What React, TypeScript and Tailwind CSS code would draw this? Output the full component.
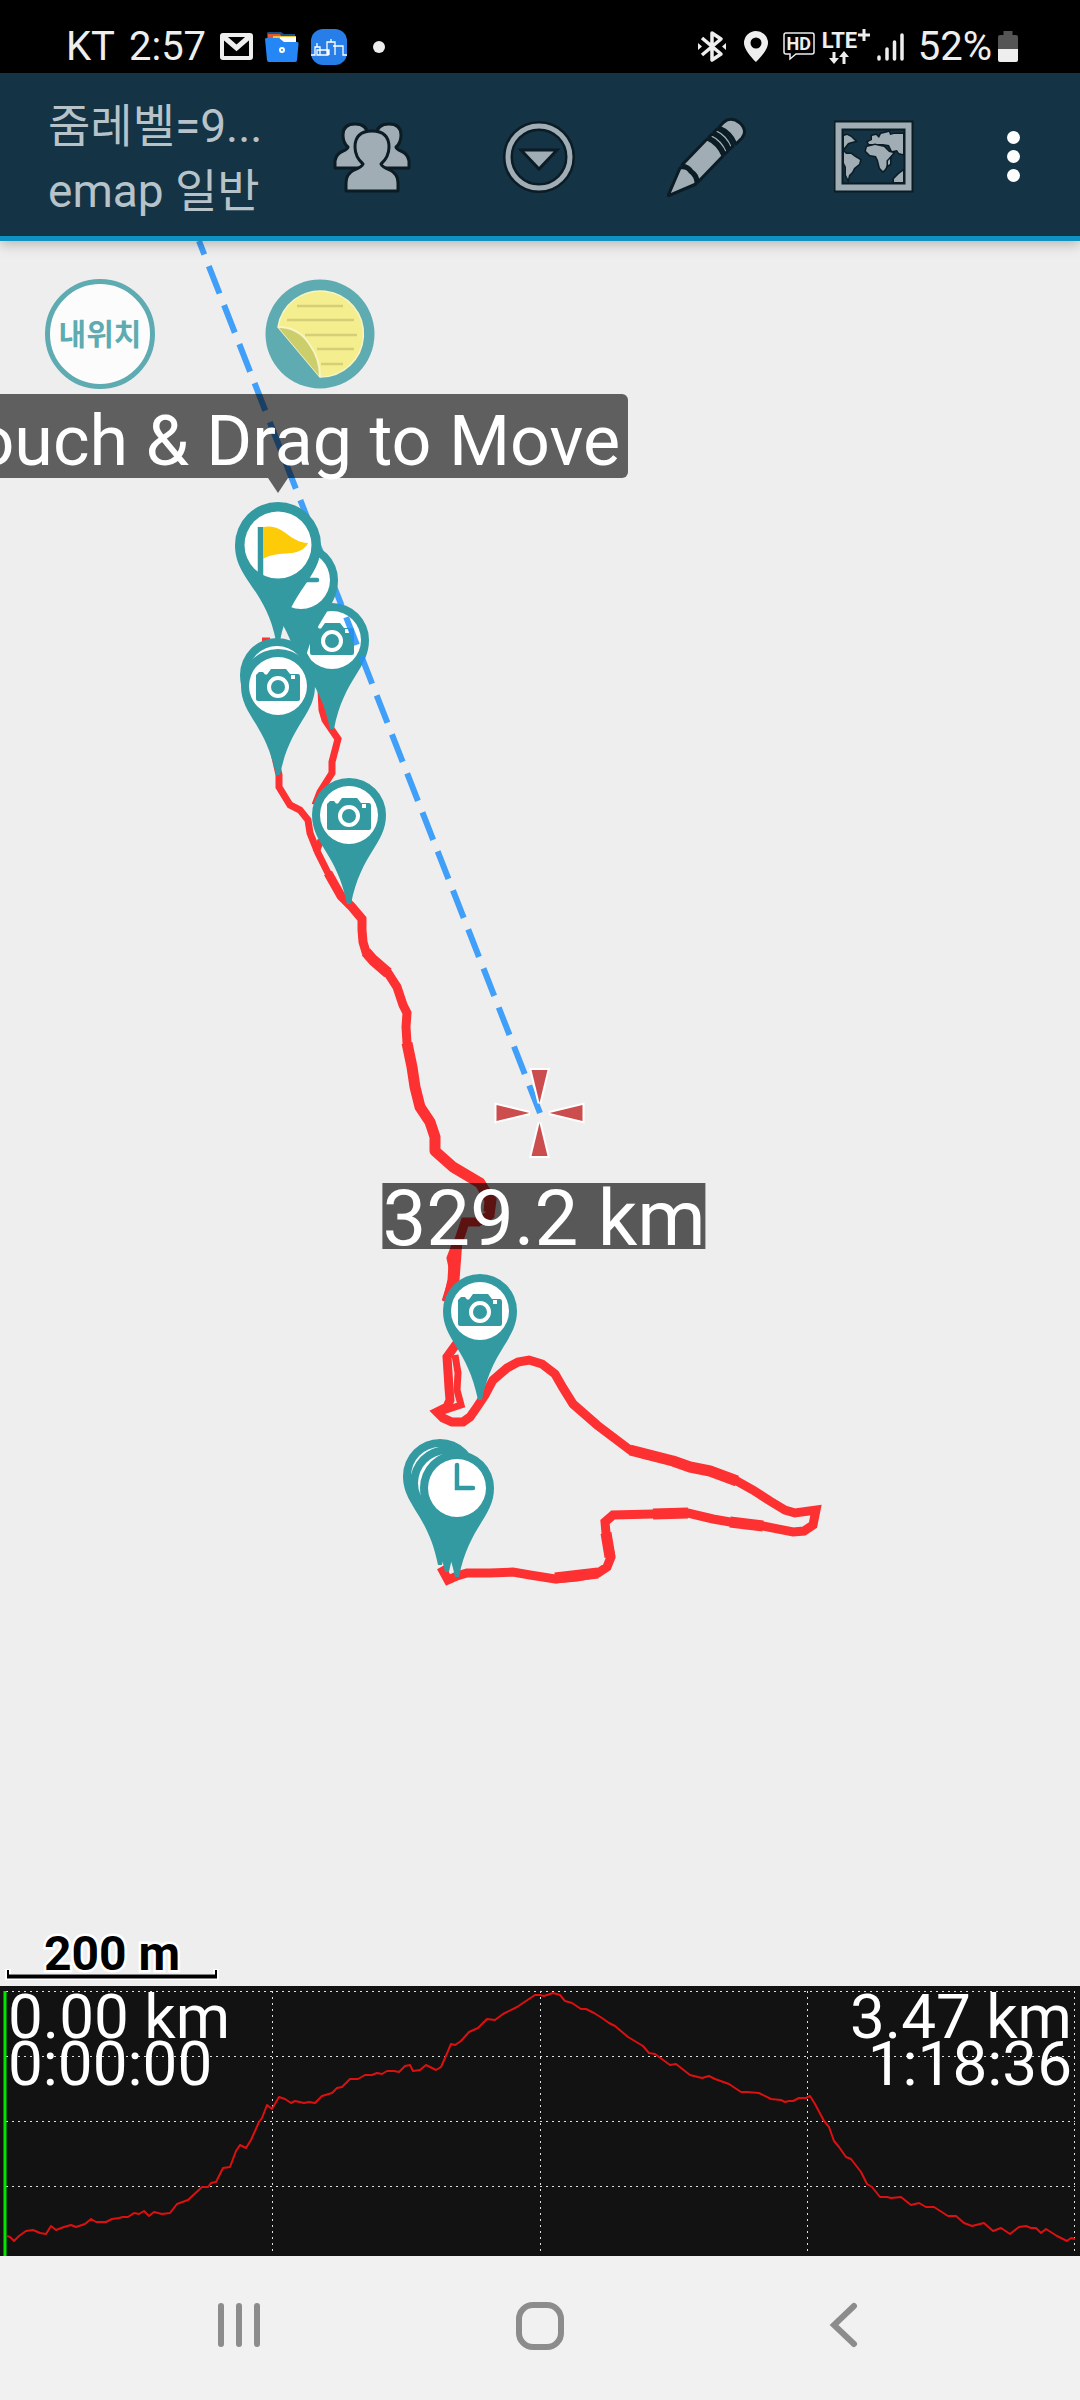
import React from "react";

const ROUTE_START =
  "M274 753 L279 775 L279 787 L290 805 L300 810 L308 820 L310 833 L318 853 L328 873 L341 896";

const ROUTE_MAIN =
  "M328 873 L341 896 L352 907 L362 919 L362 930 L363 942 L366 952 L373 960 L388 973 L397 987 L403 1005 L407 1013 L406 1027 L407 1043 L412 1067 L415 1087 L420 1107 L430 1122 L435 1137 L435 1151 L453 1167 L480 1183 L492 1200 L490 1215 L478 1222 L465 1222 L458 1243 L453 1263 L452 1280 L447 1302";

const ROUTE_LOOP =
  "M457 1343 L447 1357 L448 1372 L449 1388 L450 1400 L447 1407 L437 1412 L443 1418 L452 1422 L463 1422 L470 1417 L477 1407 L485 1395 L493 1380 L507 1368 L518 1362 L529 1360 L542 1364 L555 1374 L563 1388 L573 1404 L597 1425 L630 1450 L647 1455 L673 1461 L690 1467 L710 1471 L737 1481 L753 1490 L770 1501 L785 1510 L795 1513 L816 1510 L813 1525 L804 1531 L793 1532 L763 1526 L730 1522 L713 1519 L688 1513 L653 1514 L613 1515 L605 1522 L606 1533 L611 1557 L607 1567 L598 1573 L577 1577 L555 1579 L530 1575 L513 1572 L490 1573 L467 1573 L457 1576 L448 1580 L441 1567";

const ROUTE_RETURN =
  "M262 641 L270 641 M321 690 L322 710 L325 720 L338 739 L332 762 L332 773 L320 792 L315 805 M321 840 L316 852 M455 1355 L458 1373 L457 1390 L461 1405 L443 1411 M457 1240 L450 1258 L453 1272";

const ROUTE_WIDE =
  "M366 952 L373 960 L388 973 M407 1043 L412 1067 L415 1087 L420 1107 L430 1122 L435 1137 L435 1151 L453 1167 L480 1183 L490 1200 L489 1212 M457 1240 L454 1280 L447 1302 M630 1450 L673 1461 L690 1467 L710 1471 L737 1481 M763 1526 L730 1522 M688 1513 L653 1514 M606 1533 L610 1557 M598 1573 L555 1578";

const PROFILE =
  "7,250 10,251 14,255 19,250 26,245 33,244 40,247 46,248 51,240 56,244 64,241 71,239 76,241 85,238 91,233 96,236 106,236 112,233 119,232 123,231 128,231 134,227 139,228 144,225 149,230 154,226 162,228 170,227 177,218 188,214 202,201 208,201 211,197 216,196 223,182 230,181 236,165 240,159 246,162 251,154 259,136 262,132 267,119 272,123 279,111 285,113 291,117 295,115 304,117 309,116 315,117 322,110 332,107 337,102 342,101 350,93 358,93 365,89 372,89 377,87 382,88 387,85 394,85 399,86 405,80 410,79 413,85 420,84 426,79 436,84 441,81 445,72 451,58 455,59 461,55 469,46 478,42 487,33 495,34 503,28 517,21 535,9 540,9 544,10 553,7 560,9 565,15 572,17 581,23 586,23 594,27 602,32 609,37 615,40 628,51 643,60 649,67 655,68 670,79 676,78 690,89 702,92 709,90 715,93 729,98 741,106 747,106 759,107 771,113 781,114 785,116 789,115 793,115 799,112 806,112 810,110 815,118 824,135 829,141 834,155 839,161 846,171 851,173 861,186 867,198 872,201 880,211 887,211 891,212 901,211 911,219 919,217 926,221 934,221 948,230 956,230 964,237 972,240 984,237 993,245 1001,242 1010,248 1019,241 1026,240 1031,242 1036,242 1041,247 1046,243 1057,250 1067,255 1071,252 1075,253";

type PinProps = { x: number; y: number; kind: "camera" | "clock" };

function Pin({ x, y, kind }: PinProps) {
  return (
    <g transform={`translate(${x} ${y})`}>
      <path d="M-37 0A37 37 0 0 1 37 0C37 29 12 38 2 89H-2C-12 38-37 29-37 0Z" fill="#339aa2" />
      <circle r="29" fill="#fff" />
      {kind === "camera" ? (
        <>
          <path
            d="M-22-11L-19-14H-15L-13-11.500H-11L-7-17H8L12-12H20Q22-12 22-9V13Q22 15 20 15H-20Q-22 15-22 13Z"
            fill="#339aa2"
          />
          <circle cy="1" r="9" fill="none" stroke="#fff" strokeWidth="4" />
          <rect x="13" y="-11" width="4" height="4" fill="#fff" />
        </>
      ) : (
        <path d="M0-23V0H16" fill="none" stroke="#339aa2" strokeWidth="4.500" strokeLinecap="round" />
      )}
    </g>
  );
}

function FlagPin() {
  return (
    <g transform="translate(278 545)">
      <path d="M-43 0A43 43 0 0 1 43 0C43 34 12 44 2 96H-2C-12 44-43 34-43 0Z" fill="#339aa2" />
      <circle r="33.500" fill="#fff" />
      <path d="M-17.500-18V30" stroke="#339aa2" strokeWidth="5.500" />
      <path d="M-15-18C6-22 10-3 30-2C22 14 2 4-15 14Z" fill="#fdcb08" />
    </g>
  );
}

function MapDrawing() {
  return (
    <svg viewBox="0 241 1080 1745" className="block h-auto w-full" role="img" aria-label="Track map">
      <g fill="none" stroke="#fd3131">
        <path d={ROUTE_START} strokeWidth="7" />
        <path d={ROUTE_RETURN} strokeWidth="7" />
        <path d={ROUTE_MAIN} strokeWidth="9" />
        <path d={ROUTE_LOOP} strokeWidth="9" />
        <path d={ROUTE_WIDE} strokeWidth="11" strokeLinejoin="round" />
      </g>
      <Pin x={332} y={640} kind="camera" />
      <path
        d="M540 1113L199 241"
        stroke="#2391fa"
        strokeOpacity="0.86"
        strokeWidth="6"
        strokeDasharray="29.5 12.4"
      />
      <Pin x={301} y={580} kind="clock" />
      <Pin x={277} y={675} kind="camera" />
      <Pin x={278} y={686} kind="camera" />
      <Pin x={349} y={815} kind="camera" />
      <Pin x={480} y={1311} kind="camera" />
      <Pin x={440} y={1476} kind="clock" />
      <Pin x={447} y={1483} kind="clock" />
      <Pin x={457} y={1488} kind="clock" />
      <FlagPin />
      <g transform="translate(539.500 1113)" fill="#cc4d4d" stroke="#fff" strokeWidth="4" paintOrder="stroke">
        <path d="M-8-43H8L0-10Z" />
        <path d="M-8 43H8L0 10Z" />
        <path d="M-43-8V8L-10 0Z" />
        <path d="M43-8V8L10 0Z" />
      </g>
    </svg>
  );
}

function StatusBar() {
  return (
    <div className="flex h-[73px] items-center justify-between bg-black pt-5 pr-[62px] pl-[66px] text-[40px] leading-none text-[#eeeeee]">
      <div className="flex items-center">
        <span>KT</span>
        <span className="ml-[14px]">2:57</span>
        <svg className="ml-[14px]" width="33" height="28" viewBox="0 0 33 28" fill="none" stroke="#eee" strokeWidth="4">
          <rect x="2" y="2" width="29" height="23" rx="1" />
          <path d="M4 4L16.500 15L29 4" strokeWidth="5" />
        </svg>
        <svg className="ml-3" width="34" height="32" viewBox="0 0 34 32">
          <path d="M2 2Q2 1 4 1H16L19 3H30V12H2Z" fill="#174f86" />
          <path d="M3 3H15L17 6V10H3Z" fill="#e2582c" />
          <path d="M8 5H31V10H8Z" fill="#f6c03c" />
          <path d="M15 6H31V14H15Z" fill="#fff" />
          <path d="M0 8Q0 7 2 7H14L19 11H32Q34 11 33.500 13L32 29Q32 31 30 31H4Q2 31 2 29Z" fill="#2587f5" />
          <circle cx="17" cy="19" r="2" fill="none" stroke="#fff" strokeWidth="2" />
        </svg>
        <svg className="ml-3" width="36" height="36" viewBox="0 0 36 36">
          <rect width="36" height="36" rx="12" fill="#277ee8" />
          <path
            d="M0 26H4V18H9V26M6 21H17V26H6ZM6 14V18M16 26V13H24V26M20 10V13M22 17H32V26H36M16 21H18V26"
            fill="none"
            stroke="#fff"
            strokeWidth="1.300"
          />
        </svg>
        <span className="ml-[26px] h-3 w-3 rounded-full bg-[#eeeeee]" />
      </div>
      <div className="flex items-center">
        <svg width="28" height="33" viewBox="0 0 28 33" fill="none" stroke="#eee" strokeWidth="3.500">
          <path d="M4 8L23 24L14 30V3L23 9L4 25" strokeLinejoin="round" />
          <path d="M0 13L4 16.500L0 20ZM28 13L24 16.500L28 20Z" fill="#eee" stroke="none" />
        </svg>
        <svg className="ml-[18px]" width="24" height="31" viewBox="0 0 24 31">
          <path
            d="M12 0A12 12 0 0 1 24 12C24 20 12 31 12 31S0 20 0 12A12 12 0 0 1 12 0ZM12 6.500A5.500 5.500 0 1 0 12 17.500A5.500 5.500 0 1 0 12 6.500Z"
            fill="#eee"
          />
        </svg>
        <span className="relative ml-[15px] flex h-[29px] w-8 justify-center">
          <svg className="absolute inset-0" width="32" height="29" viewBox="0 0 32 29" fill="none" stroke="#eee" strokeWidth="1.500">
            <path d="M3 1H29Q31 1 31 3V20Q31 22 29 22H13L7 27V22H3Q1 22 1 20V3Q1 1 3 1Z" />
          </svg>
          <span className="pt-[2px] text-[18px] leading-5 font-bold">HD</span>
        </span>
        <span className="relative ml-[7px] flex h-9 w-12 text-[22px] leading-6 font-bold">
          LTE
          <svg className="absolute inset-0" width="48" height="36" viewBox="0 0 48 36" fill="none" stroke="#eee" strokeWidth="3">
            <path d="M42 0V12M36 6H48" />
            <path d="M12 23V31M22 27V35" />
            <path d="M7 29H17L12 35ZM17 28H27L22 22Z" fill="#eee" stroke="none" />
          </svg>
        </span>
        <svg className="ml-[7px]" width="27" height="30" viewBox="0 0 27 30" stroke="#eee" strokeWidth="3.500" strokeLinecap="round">
          <path d="M2 25V27M10 17V27M17.500 10V27M25 3V27" />
        </svg>
        <span className="ml-[14px]">52%</span>
        <svg className="ml-[6px]" width="20" height="32" viewBox="0 0 20 32">
          <path d="M5.500 0H14.500V4H18Q20 4 20 6V18H0V6Q0 4 2 4H5.500Z" fill="#555" />
          <path d="M0 18H20V29Q20 31 18 31H2Q0 31 0 29Z" fill="#eee" />
        </svg>
      </div>
    </div>
  );
}

function ToolBar() {
  const ink = { fill: "#a0adb4", stroke: "#0b1c25", strokeWidth: 3 };
  return (
    <header className="relative z-10 flex h-[168px] items-center border-b-[5px] border-[#1191c0] bg-[#143344] pt-1 pl-12 shadow-[0_3px_12px_rgba(0,0,0,0.25)]">
      <h1 className="w-[220px] shrink-0 pt-1 text-[46px] leading-[65px] font-normal whitespace-nowrap text-[#b7c3c9]">
        <span className="block">줌레벨=9...</span>
        <span className="block">emap 일반</span>
      </h1>
      <div className="flex flex-1 items-center justify-between pr-[55px] pl-16">
        <button type="button" aria-label="Group" className="h-20 w-20">
          <svg width="80" height="80" viewBox="0 0 80 80" {...ink} strokeLinejoin="round">
            <path d="M3 51V44Q4 37 11 34Q16 32 16 30Q11 26 11 18Q11 7 23 7Q35 7 36 18Q36 26 30 30L34 51Z" />
            <path d="M77 51V44Q76 37 69 34Q64 32 64 30Q69 26 69 18Q69 7 57 7Q45 7 44 18Q44 26 50 30L46 51Z" />
            <path d="M14 74V66Q14 57 22 53Q30 50 31 47Q23 40 23 30Q23 14 40 14Q57 14 57 30Q57 40 49 47Q50 50 58 53Q66 57 66 66V74Z" />
          </svg>
        </button>
        <button type="button" aria-label="More options" className="h-20 w-20">
          <svg width="80" height="80" viewBox="0 0 80 80">
            <circle cx="40" cy="40" r="31" fill="none" stroke="#0b1c25" strokeWidth="10" />
            <circle cx="40" cy="40" r="31" fill="none" stroke="#a0adb4" strokeWidth="5" />
            <path d="M22 33H58L40 52Z" {...ink} />
          </svg>
        </button>
        <button type="button" aria-label="Edit" className="h-20 w-20">
          <svg width="80" height="80" viewBox="0 0 80 80" {...ink} strokeLinejoin="round">
            <path d="M1 79L13 51Q20 50 23 55Q29 59 29 67Z" />
            <path d="M15 48L40 22Q51 27 56 39L31 65Q31 58 25 54Q22 49 15 48Z" />
            <path d="M42 20L45 17Q56 22 61 34L58 37Q53 25 42 20Z" />
            <path d="M47 15L50 12Q61 17 66 29L63 32Q58 20 47 15Z" />
            <path d="M52 10L57 5Q64-1 73 6Q81 14 75 21L69 27Q64 15 52 10Z" />
          </svg>
        </button>
        <button type="button" aria-label="Map" className="h-20 w-20">
          <svg width="80" height="80" viewBox="0 0 80 80">
            <rect x="4.500" y="8.500" width="70" height="62" fill="none" stroke="#0b1c25" strokeWidth="10" />
            <rect x="4.500" y="8.500" width="70" height="62" fill="none" stroke="#a0adb4" strokeWidth="6" />
            <g {...ink} paintOrder="stroke">
              <path d="M10 19L13 18L17 20L19 22L21 24L17 25L14 26L10 31Z" />
              <path d="M10 35L12 37L17 37L21 40L26 43L25 47L20 51L18 55L15 58L14 62L12 58L12 50L10 46Z" />
              <path d="M34 25L38 23L38 19L42 18L45 21L47 17L55 15L56 18L60 17L69 17V37L65 36L63 33L58 34L55 28L49 27L42 27L35 27Z" />
              <path d="M33 30L41 28L50 30L55 35L59 36L55 41L54 46L51 52L49 54L46 51L44 43L42 39L36 38L32 34Z" />
              <path d="M54 44L56 42V47L54 48Z" />
              <path d="M60 62L65 57L69 54V65H60Z" />
            </g>
          </svg>
        </button>
        <button type="button" aria-label="Menu" className="flex h-20 w-6 flex-col items-center justify-center gap-[6px]">
          <span className="h-[13px] w-[13px] rounded-full bg-white" />
          <span className="h-[13px] w-[13px] rounded-full bg-white" />
          <span className="h-[13px] w-[13px] rounded-full bg-white" />
        </button>
      </div>
    </header>
  );
}

function MapView() {
  return (
    <main className="relative flex-1 overflow-hidden bg-[#eeeeee]">
      <MapDrawing />
      <div className="absolute top-[38px] left-[45px] flex gap-[110px]">
        <button
          type="button"
          className="flex h-[110px] w-[110px] items-center justify-center rounded-full border-[5px] border-[#5eabb2] bg-[#fcfcfc] text-[30px] font-bold text-[#5eabb2]"
        >
          내위치
        </button>
        <button type="button" aria-label="Note" className="h-[110px] w-[110px]">
          <svg width="110" height="110" viewBox="0 0 110 110">
            <circle cx="55" cy="55" r="54.500" fill="#5eabb2" />
            <path d="M13 48A43 43 0 1 1 55 98Z" fill="#f4ee8e" stroke="#f7f5c4" strokeWidth="1.500" />
            <path d="M32 27H78M22 41H89M40 56H92M52 70H89M56 85H78" stroke="#d5d078" strokeWidth="2.500" />
            <path d="M13 48Q34 48 45 66Q55 80 55 98Z" fill="#cccd6b" />
            <path d="M13 48Q34 48 45 66Q55 80 55 98" fill="none" stroke="#f7f5c4" strokeWidth="2" />
          </svg>
        </button>
      </div>
      <div className="absolute top-[153px] left-[278px] -translate-x-1/2">
        <div className="flex h-[84px] items-center rounded-md bg-black/60 px-2 pt-[10px] text-[70px] leading-none whitespace-nowrap text-white">
          Touch &amp; Drag to Move
        </div>
        <svg className="mx-auto block" width="20" height="15" viewBox="0 0 20 15">
          <path d="M0 0H20L10 15Z" fillOpacity="0.600" />
        </svg>
      </div>
      <div className="absolute top-[942px] left-1/2 ml-1 flex h-[66px] -translate-x-1/2 items-center bg-black/63 pt-[6px] text-[78px] leading-none whitespace-nowrap text-white">
        <span>329.2 km</span>
      </div>
      <div className="absolute bottom-[5px] left-[5px] flex w-[214px] flex-col items-center">
        <span className="-mb-2 text-[48px] leading-[46px] font-bold text-black [paint-order:stroke] [-webkit-text-stroke:5px_white]">
          200 m
        </span>
        <svg className="block w-full" height="12" viewBox="0 0 214 12" fill="none">
          <path d="M3 0V8H211V0" stroke="#fff" strokeWidth="6" />
          <path d="M3 1V7.500H211V1" stroke="#000" strokeWidth="2" />
          <path d="M2 7.500H212" stroke="#000" strokeWidth="4" />
        </svg>
      </div>
    </main>
  );
}

function ProfileChart() {
  return (
    <section className="relative bg-[#121212] text-[62px] leading-[47px] text-white">
      <svg viewBox="0 0 1080 270" className="block h-auto w-full" role="img" aria-label="Elevation profile">
        <g stroke="#e0e0e0" strokeWidth="1" strokeDasharray="2 4" shapeRendering="crispEdges">
          <path d="M6 5.500H1075M6 70.500H1075M6 135.500H1075M6 200.500H1075" />
          <path d="M272.500 5V266M540.500 5V266M807.500 5V266M1074.500 5V266" />
        </g>
        <polyline points={PROFILE} fill="none" stroke="#dc1010" strokeWidth="2" strokeLinejoin="round" />
        <path d="M5 5V270" stroke="#00e600" strokeWidth="3" />
      </svg>
      <div className="absolute inset-x-0 top-[7px] flex justify-between px-2">
        <div>
          <div>0.00 km</div>
          <div>0:00:00</div>
        </div>
        <div className="text-right">
          <div>3.47 km</div>
          <div>1:18:36</div>
        </div>
      </div>
    </section>
  );
}

function NavBar() {
  return (
    <nav className="flex h-36 items-center justify-around bg-[#f1f1f1] px-[88px] pb-1">
      <button type="button" aria-label="Recents" className="flex h-16 w-16 items-center justify-center">
        <svg width="48" height="48" viewBox="0 0 48 48" stroke="#8c8c8c" strokeWidth="6" strokeLinecap="round">
          <path d="M6 4V42M24 4V42M42 4V42" />
        </svg>
      </button>
      <button type="button" aria-label="Home" className="flex h-16 w-16 items-center justify-center">
        <svg width="48" height="48" viewBox="0 0 48 48" fill="none" stroke="#8c8c8c" strokeWidth="6">
          <rect x="3" y="3" width="42" height="42" rx="14" />
        </svg>
      </button>
      <button type="button" aria-label="Back" className="flex h-16 w-16 items-center justify-center">
        <svg width="48" height="48" viewBox="0 0 48 48" fill="none" stroke="#8c8c8c" strokeWidth="6" strokeLinecap="round">
          <path d="M37 4L17 23L37 42" />
        </svg>
      </button>
    </nav>
  );
}

export default function App() {
  return (
    <div className="flex min-h-screen flex-col overflow-x-hidden font-[Roboto,'Noto_Sans_CJK_KR',sans-serif]">
      <StatusBar />
      <ToolBar />
      <MapView />
      <ProfileChart />
      <NavBar />
    </div>
  );
}
